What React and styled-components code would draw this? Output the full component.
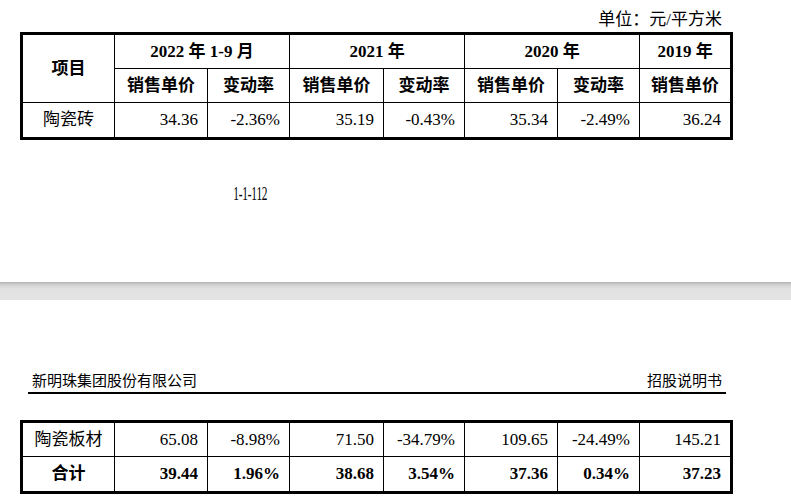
import React from "react";
import styled, { createGlobalStyle } from "styled-components";

const GlobalStyle = createGlobalStyle`
  html, body {
    margin: 0;
    padding: 0;
    background: #fff;
  }
  body {
    width: 791px;
    height: 499px;
    overflow: hidden;
    color: #000;
    font-family: "Liberation Serif", "Noto Sans CJK SC", serif;
  }
`;

const Sheet = styled.div`
  background: #fff;
`;

const TopSheet = styled(Sheet)`
  padding-top: 10px;
  height: 282px;
  box-sizing: border-box;
`;

const UnitLine = styled.div`
  font-size: 17px;
  line-height: 20px;
  text-align: right;
  padding-right: 69px;
`;

const PageNumber = styled.div`
  margin-top: 44px;
  width: 500px;
  text-align: center;
  font-size: 19px;
  line-height: 20px;

  span {
    display: inline-block;
    letter-spacing: -0.4px;
    transform: scaleX(0.6);
  }
`;

const PageGap = styled.div`
  height: 18px;
  background: linear-gradient(
    to bottom,
    #b4b4b4 0px,
    #d2d2d2 3px,
    #e2e2e2 7px,
    #e4e4e4 100%
  );
`;

const BottomSheet = styled(Sheet)`
  padding-top: 72px;
`;

const RunningHead = styled.div`
  margin: 0 65px 0 28px;
  padding: 0 4px 2px;
  display: flex;
  justify-content: space-between;
  align-items: flex-end;
  border-bottom: 2px solid #000;
  font-size: 15px;
  line-height: 18px;
`;

const Table = styled.table`
  margin-left: 20px;
  margin-top: ${(p) => p.$top || 0}px;
  width: 713px;
  table-layout: fixed;
  border-collapse: separate;
  border-spacing: 0;
  border: 3px solid #000;
  font-size: 17px;
`;

const Cell = styled.td`
  box-sizing: border-box;
  height: 34px;
  padding: 0 9px;
  line-height: 20px;
  border-right: ${(p) => (p.$last ? "none" : "1px solid #000")};
  border-bottom: ${(p) => (p.$bottom ? "none" : "1px solid #000")};
  text-align: ${(p) => p.$align || "right"};
  font-weight: ${(p) => (p.$bold ? 700 : 400)};
  white-space: nowrap;
  vertical-align: middle;
`;

const widths = [92, 93, 82, 94, 81, 93, 82, 90];

const Cols = () => (
  <colgroup>
    {widths.map((w, i) => (
      <col key={i} style={{ width: w }} />
    ))}
  </colgroup>
);

const DataRow = ({ label, values, bold, bottom }) => (
  <tr>
    <Cell $align="center" $bold={bold} $bottom={bottom}>
      {label}
    </Cell>
    {values.map((v, i) => (
      <Cell key={i} $bold={bold} $bottom={bottom} $last={i === values.length - 1}>
        {v}
      </Cell>
    ))}
  </tr>
);

export default function App() {
  return (
    <>
      <GlobalStyle />
      <TopSheet>
        <UnitLine>单位：元/平方米</UnitLine>
        <Table $top={2}>
          <Cols />
          <tbody>
            <tr>
              <Cell rowSpan={2} $align="center" $bold>
                项目
              </Cell>
              <Cell colSpan={2} $align="center" $bold>
                2022 年 1-9 月
              </Cell>
              <Cell colSpan={2} $align="center" $bold>
                2021 年
              </Cell>
              <Cell colSpan={2} $align="center" $bold>
                2020 年
              </Cell>
              <Cell $align="center" $bold $last>
                2019 年
              </Cell>
            </tr>
            <tr>
              <Cell $align="center" $bold>销售单价</Cell>
              <Cell $align="center" $bold>变动率</Cell>
              <Cell $align="center" $bold>销售单价</Cell>
              <Cell $align="center" $bold>变动率</Cell>
              <Cell $align="center" $bold>销售单价</Cell>
              <Cell $align="center" $bold>变动率</Cell>
              <Cell $align="center" $bold $last>销售单价</Cell>
            </tr>
            <DataRow
              label="陶瓷砖"
              values={["34.36", "-2.36%", "35.19", "-0.43%", "35.34", "-2.49%", "36.24"]}
              bottom
            />
          </tbody>
        </Table>
        <PageNumber>
          <span>1-1-112</span>
        </PageNumber>
      </TopSheet>
      <PageGap />
      <BottomSheet>
        <RunningHead>
          <span>新明珠集团股份有限公司</span>
          <span>招股说明书</span>
        </RunningHead>
        <Table $top={26}>
          <Cols />
          <tbody>
            <DataRow
              label="陶瓷板材"
              values={["65.08", "-8.98%", "71.50", "-34.79%", "109.65", "-24.49%", "145.21"]}
            />
            <DataRow
              label="合计"
              values={["39.44", "1.96%", "38.68", "3.54%", "37.36", "0.34%", "37.23"]}
              bold
              bottom
            />
          </tbody>
        </Table>
      </BottomSheet>
    </>
  );
}
